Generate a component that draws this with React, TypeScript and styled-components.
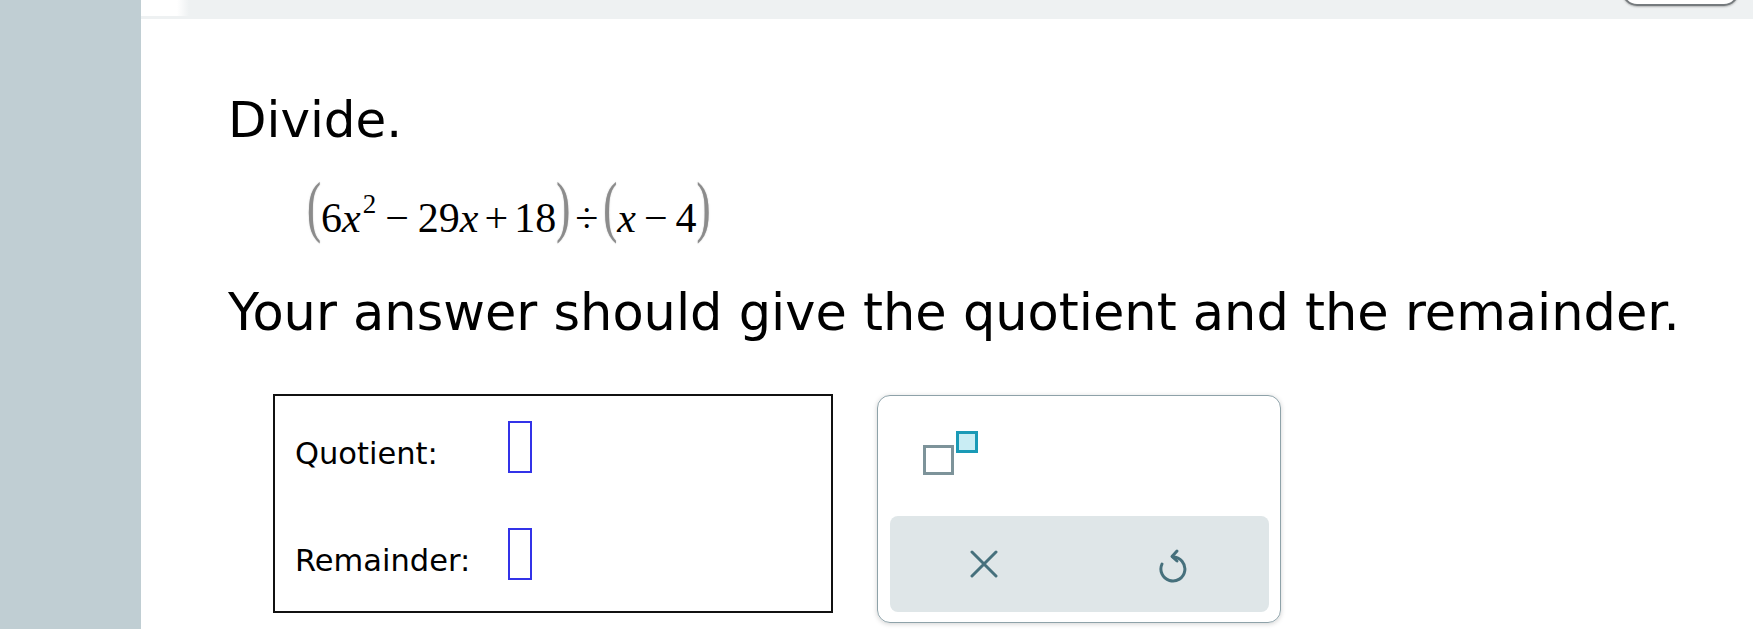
import styled, { createGlobalStyle } from "styled-components";

const GlobalStyle = createGlobalStyle`
  html, body {
    margin: 0;
    padding: 0;
    background: #ffffff;
  }
  body {
    font-family: "DejaVu Sans", Verdana, sans-serif;
    color: #000;
  }
`;

const Page = styled.div`
  display: grid;
  grid-template-columns: 141px 1fr;
  min-height: 629px;
  overflow: hidden;
`;

const Sidebar = styled.aside`
  background: #c0ced3;
`;

const Main = styled.main`
  display: flex;
  flex-direction: column;
  min-width: 0;
`;

const TopBar = styled.div`
  display: flex;
  justify-content: space-between;
  align-items: flex-start;
  height: 19px;
  background: #eef1f2;
  overflow: hidden;
`;

const Tab = styled.div`
  width: 48px;
  height: 16px;
  background: linear-gradient(to right, #ffffff 0%, #ffffff 75%, #eef1f2 100%);
`;

const PillButton = styled.button`
  width: 117px;
  height: 30px;
  margin: -24px 14px 0 0;
  border: 2px solid #767b7e;
  border-radius: 15px;
  background: #ffffff;
  box-shadow: 0 1px 2px rgba(0, 0, 0, 0.25);
`;

const Content = styled.div`
  display: flex;
  flex-direction: column;
  padding: 72px 0 0 87px;
`;

const Title = styled.h1`
  margin: 0;
  font-size: 50px;
  line-height: 58px;
  font-weight: normal;
`;

const MathLine = styled.div`
  margin: 40px 0 0 79px;
  font-family: "Liberation Serif", "Times New Roman", serif;
  font-size: 42px;
  line-height: 58px;
  white-space: nowrap;
`;

const Paren = styled.span`
  display: inline-block;
  color: #8c8c8c;
  text-shadow: 0 0 1px rgba(120, 120, 120, 0.6);
  transform: translateY(-12px) scaleY(1.62);
`;

const Var = styled.i`
  font-style: italic;
`;

const Sup = styled.sup`
  font-size: 27px;
  vertical-align: 19px;
  line-height: 0;
  margin-left: 2px;
`;

const Op = styled.span<{ $gap: number }>`
  margin: 0 ${(p) => p.$gap}px;
`;

const Prompt = styled.p`
  margin: 36px 0 0;
  font-size: 51px;
  line-height: 60px;
  white-space: nowrap;
`;

const AnswerArea = styled.div`
  display: flex;
  align-items: flex-start;
  gap: 44px;
  margin: 51px 0 0 45px;
`;

const AnswerBox = styled.div`
  box-sizing: border-box;
  width: 560px;
  height: 219px;
  border: 2px solid #111;
  padding: 25px 0 0 20px;
  display: flex;
  flex-direction: column;
  gap: 55px;
`;

const AnswerRow = styled.div`
  display: flex;
  align-items: flex-start;
  height: 52px;
`;

const Label = styled.span`
  width: 213px;
  margin-top: 7px;
  font-size: 30.5px;
  line-height: 52px;
`;

const Blank = styled.span`
  box-sizing: border-box;
  width: 24px;
  height: 52px;
  border: 2px solid #3232e8;
`;

const Keypad = styled.div`
  box-sizing: border-box;
  width: 404px;
  height: 228px;
  margin-top: 1px;
  border: 1.5px solid #8ea2a9;
  border-radius: 13px;
  box-shadow: 0 1px 5px rgba(0, 0, 0, 0.18);
  padding: 0 11.5px 10.5px;
  display: flex;
  flex-direction: column;
`;

const KeyTop = styled.div`
  flex: 1;
  padding: 34.5px 0 0 33px;
`;

const KeyBar = styled.div`
  display: flex;
  height: 96px;
  background: #dfe6e8;
  border-radius: 8px;
`;

const KeyButton = styled.button`
  flex: 1;
  display: flex;
  align-items: center;
  justify-content: center;
  border: 0;
  background: transparent;
  padding: 0;
  color: #46707c;
`;

const SuperIcon = () => (
  <svg width="57" height="45" viewBox="0 0 57 45">
    <rect x="1.5" y="15.5" width="28" height="27" fill="#fff" stroke="#7d939a" strokeWidth="3" />
    <rect x="34.5" y="1.5" width="19" height="19" fill="#c9edf4" stroke="#1a9ab6" strokeWidth="3" />
  </svg>
);

const CloseIcon = () => (
  <svg width="28" height="28" viewBox="0 0 28 28">
    <path d="M2 2L26 26M26 2L2 26" stroke="currentColor" strokeWidth="3" strokeLinecap="round" />
  </svg>
);

const UndoIcon = () => (
  <svg width="30" height="38" viewBox="0 0 30 38" fill="none">
    <path
      d="M14 12A12 12 0 1 1 3 19"
      stroke="currentColor"
      strokeWidth="3"
      strokeLinecap="round"
    />
    <path d="M18 6L13 11.5L18 16" stroke="currentColor" strokeWidth="3" strokeLinecap="round" strokeLinejoin="round" />
  </svg>
);

export default function App() {
  return (
    <>
      <GlobalStyle />
      <Page>
        <Sidebar />
        <Main>
          <TopBar>
            <Tab />
            <PillButton aria-label="menu" />
          </TopBar>
          <Content>
            <Title>Divide.</Title>
            <MathLine>
              <Paren>(</Paren>6<Var>x</Var>
              <Sup>2</Sup>
              <Op $gap={9}>−</Op>29<Var>x</Var>
              <Op $gap={6}>+</Op>18<Paren>)</Paren>
              <Op $gap={5}>÷</Op>
              <Paren>(</Paren>
              <Var>x</Var>
              <Op $gap={8}>−</Op>4<Paren>)</Paren>
            </MathLine>
            <Prompt>Your answer should give the quotient and the remainder.</Prompt>
            <AnswerArea>
              <AnswerBox>
                <AnswerRow>
                  <Label>Quotient:</Label>
                  <Blank />
                </AnswerRow>
                <AnswerRow>
                  <Label>Remainder:</Label>
                  <Blank />
                </AnswerRow>
              </AnswerBox>
              <Keypad>
                <KeyTop>
                  <SuperIcon />
                </KeyTop>
                <KeyBar>
                  <KeyButton aria-label="clear">
                    <CloseIcon />
                  </KeyButton>
                  <KeyButton aria-label="undo">
                    <UndoIcon />
                  </KeyButton>
                </KeyBar>
              </Keypad>
            </AnswerArea>
          </Content>
        </Main>
      </Page>
    </>
  );
}
